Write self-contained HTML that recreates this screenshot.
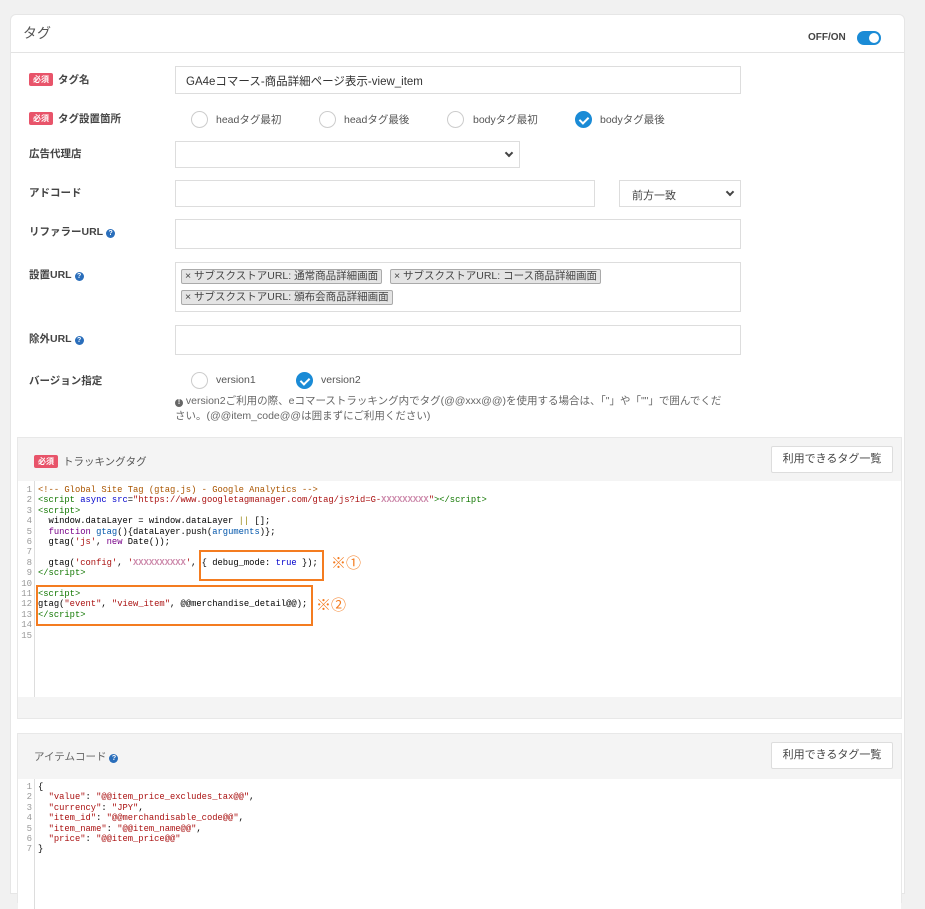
<!DOCTYPE html>
<html><head><meta charset="utf-8"><style>
*{box-sizing:border-box;margin:0;padding:0}
body{width:925px;height:873px;background:#f1f1f1;font-family:"Liberation Sans","Noto Sans CJK JP",sans-serif;color:#333;font-size:11px;overflow:hidden;position:relative}
.card{position:absolute;left:10px;top:14px;width:895px;height:880px;background:#fff;border-radius:6px 6px 0 0;border:1px solid #e6e6e6}
.hd{position:absolute;left:0;top:0;width:100%;height:38px;border-bottom:1px solid #e3e3e3}
.abs{position:absolute}
.lbl{position:absolute;left:18px;font-weight:bold;font-size:10.5px;color:#444}
.req{display:inline-block;background:#e8546a;color:#fff;font-size:8px;padding:1px 4px;border-radius:2px;margin-right:5px;vertical-align:1px;font-weight:bold}
.inp{position:absolute;border:1px solid #ddd;background:#fff}
.radio{position:absolute;width:17px;height:17px;border-radius:50%;border:1px solid #ccc;background:#fff}
.radio.on{background:#1a8bd6;border-color:#1a8bd6}
.radio.on:after{content:"";position:absolute;left:5px;top:3px;width:4px;height:7px;border:solid #fff;border-width:0 2px 2px 0;transform:rotate(45deg)}
.rl{position:absolute;font-size:10.5px;color:#555}
.q{display:inline-block;width:9px;height:9px;border-radius:50%;background:#2a6ebb;color:#fff;font-size:7px;line-height:9px;text-align:center;vertical-align:0;margin-left:3px;font-weight:bold}
.chip{position:absolute;height:15px;border:1px solid #aaa;background:#e4e4e4;border-radius:2px;font-size:10.5px;color:#444;line-height:13px;padding:0 3px;white-space:nowrap}
.sec{position:absolute;left:6px;width:885px;background:#f4f4f4;border:1px solid #e8e8e8}
.btn{position:absolute;right:8px;width:122px;height:27px;background:#fff;border:1px solid #ddd;border-radius:2px;font-size:11px;text-align:center;line-height:25px;color:#444}
.code{position:absolute;left:0;width:100%;background:#fff}
.gut{position:absolute;left:0;top:0;width:17px;height:100%;border-right:1px solid #ddd;background:#fff}
pre{font-family:"Liberation Mono",monospace;font-size:8.8px;line-height:10.4px;color:#000;position:absolute;left:20px}
.ln{position:absolute;left:2px;width:12px;text-align:right;font-family:"Liberation Mono",monospace;font-size:9px;line-height:10.4px;color:#999}
.cm{color:#a50}.tg{color:#170}.at{color:#00c}.st{color:#a11}.kw{color:#708}.v2{color:#05a}
.px{color:#c8a;font-weight:bold}
.ob{position:absolute;border:2px solid #f47c20}
.mk{position:absolute;color:#f47c20;font-size:15px}
.chev{position:absolute;right:7px;top:8px;width:6px;height:6px;border:solid #444;border-width:0 2px 2px 0;transform:rotate(45deg)}
</style></head><body>
<div class="card">
 <div class="hd">
  <div class="abs" style="left:12px;top:8px;font-size:14px;color:#555">タグ</div>
  <div class="abs" style="left:797px;top:17px;font-size:10px;font-weight:bold;color:#444">OFF/ON</div>
  <div class="abs" style="left:846px;top:16px;width:24px;height:14px;border-radius:7px;background:#1a8bd6"><div style="position:absolute;right:2px;top:2px;width:10px;height:10px;border-radius:50%;background:#fff"></div></div>
 </div>
 <div class="lbl" style="top:57px"><span class="req">必須</span>タグ名</div>
 <div class="inp" style="left:164px;top:51px;width:566px;height:28px;padding:6px 10px;font-size:11.5px;color:#333">GA4eコマース-商品詳細ページ表示-view_item</div>
 <div class="lbl" style="top:96px"><span class="req">必須</span>タグ設置箇所</div>
 <div class="radio" style="left:180px;top:96px"></div><div class="rl" style="left:205px;top:97px">headタグ最初</div>
 <div class="radio" style="left:308px;top:96px"></div><div class="rl" style="left:333px;top:97px">headタグ最後</div>
 <div class="radio" style="left:436px;top:96px"></div><div class="rl" style="left:462px;top:97px">bodyタグ最初</div>
 <div class="radio on" style="left:564px;top:96px"></div><div class="rl" style="left:589px;top:97px">bodyタグ最後</div>
 <div class="lbl" style="top:131px">広告代理店</div>
 <div class="inp" style="left:164px;top:126px;width:345px;height:27px"><span class="chev"></span></div>
 <div class="lbl" style="top:170px">アドコード</div>
 <div class="inp" style="left:164px;top:165px;width:420px;height:27px"></div>
 <div class="inp" style="left:608px;top:165px;width:122px;height:27px;padding:6px 12px;font-size:11px;color:#444">前方一致<span class="chev"></span></div>
 <div class="lbl" style="top:209px">リファラーURL<span class="q">?</span></div>
 <div class="inp" style="left:164px;top:204px;width:566px;height:30px"></div>
 <div class="lbl" style="top:252px">設置URL<span class="q">?</span></div>
 <div class="inp" style="left:164px;top:247px;width:566px;height:50px"></div>
 <div class="chip" style="left:170px;top:254px">× サブスクストアURL: 通常商品詳細画面</div>
 <div class="chip" style="left:379px;top:254px">× サブスクストアURL: コース商品詳細画面</div>
 <div class="chip" style="left:170px;top:275px">× サブスクストアURL: 頒布会商品詳細画面</div>
 <div class="lbl" style="top:316px">除外URL<span class="q">?</span></div>
 <div class="inp" style="left:164px;top:310px;width:566px;height:30px"></div>
 <div class="lbl" style="top:358px">バージョン指定</div>
 <div class="radio" style="left:180px;top:357px"></div><div class="rl" style="left:205px;top:359px">version1</div>
 <div class="radio on" style="left:285px;top:357px"></div><div class="rl" style="left:310px;top:359px">version2</div>
 <div class="abs" style="left:164px;top:379px;width:600px;font-size:10.5px;line-height:15px;color:#666"><span style="display:inline-block;width:8px;height:8px;border-radius:50%;background:#666;color:#fff;font-size:7px;line-height:8px;text-align:center;font-weight:bold">!</span> version2ご利用の際、eコマーストラッキング内でタグ(@@xxx@@)を使用する場合は、「"」や「""」で囲んでくだ<br>さい。(@@item_code@@は囲まずにご利用ください)</div>

 <div class="sec" style="top:422px;height:282px">
  <div class="abs" style="left:16px;top:16px;font-size:10.5px;color:#555"><span class="req">必須</span>トラッキングタグ</div>
  <div class="btn" style="top:8px">利用できるタグ一覧</div>
  <div class="code" style="top:43px;height:216px">
   <div class="gut"></div>
   <div class="ln" style="top:4px">1<br>2<br>3<br>4<br>5<br>6<br>7<br>8<br>9<br>10<br>11<br>12<br>13<br>14<br>15</div>
   <pre style="top:4px"><span class="cm">&lt;!-- Global Site Tag (gtag.js) - Google Analytics --&gt;</span>
<span class="tg">&lt;script</span> <span class="at">async</span> <span class="at">src</span>=<span class="st">"https://www.googletagmanager.com/gtag/js?id=G-<span class="px">XXXXXXXXX</span>"</span><span class="tg">&gt;&lt;/script&gt;</span>
<span class="tg">&lt;script&gt;</span>
  window.dataLayer = window.dataLayer <span style="color:#981">||</span> [];
  <span class="kw">function</span> <span class="v2">gtag</span>(){dataLayer.push(<span class="v2">arguments</span>)};
  gtag(<span class="st">'js'</span>, <span class="kw">new</span> Date());

  gtag(<span class="st">'config'</span>, <span class="st">'<span class="px">XXXXXXXXXX</span>'</span>, { debug_mode: <span class="at">true</span> });
<span class="tg">&lt;/script&gt;</span>

<span class="tg">&lt;script&gt;</span>
gtag(<span class="st">"event"</span>, <span class="st">"view_item"</span>, @@merchandise_detail@@);
<span class="tg">&lt;/script&gt;</span>
</pre>
  </div>
 </div>
 <div class="ob" style="left:188px;top:535px;width:125px;height:31px"></div>
 <div class="mk" style="left:320px;top:537px">※①</div>
 <div class="ob" style="left:25px;top:570px;width:277px;height:41px"></div>
 <div class="mk" style="left:305px;top:579px">※②</div>

 <div class="sec" style="top:718px;height:170px">
  <div class="abs" style="left:16px;top:15px;font-size:10.5px;color:#666">アイテムコード<span class="q">?</span></div>
  <div class="btn" style="top:8px">利用できるタグ一覧</div>
  <div class="code" style="top:45px;height:130px">
   <div class="gut"></div>
   <div class="ln" style="top:3px">1<br>2<br>3<br>4<br>5<br>6<br>7</div>
   <pre style="top:3px">{
  <span class="st">"value"</span>: <span class="st">"@@item_price_excludes_tax@@"</span>,
  <span class="st">"currency"</span>: <span class="st">"JPY"</span>,
  <span class="st">"item_id"</span>: <span class="st">"@@merchandisable_code@@"</span>,
  <span class="st">"item_name"</span>: <span class="st">"@@item_name@@"</span>,
  <span class="st">"price"</span>: <span class="st">"@@item_price@@"</span>
}</pre>
  </div>
 </div>
</div>
</body></html>
